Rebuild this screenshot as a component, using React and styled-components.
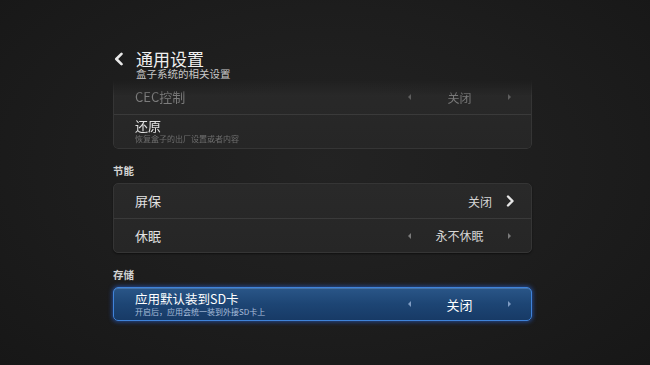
import React from "react";
import styled, { createGlobalStyle } from "styled-components";

const GlobalStyle = createGlobalStyle`
  html, body {
    margin: 0;
    padding: 0;
    background: #1a1a1a;
  }
  * {
    box-sizing: border-box;
  }
`;

const Screen = styled.div`
  width: 650px;
  height: 365px;
  overflow: hidden;
  background: radial-gradient(ellipse at 50% 45%, #232323 0%, #1d1d1d 55%, #171717 100%);
  font-family: "Noto Sans CJK SC", "Noto Sans", "Liberation Sans", sans-serif;
  color: #dcdcdc;
  padding: 50px 118px 0 113px;
`;

const Header = styled.div`
  display: flex;
  align-items: flex-start;
  gap: 11px;
`;

const BackIcon = styled.svg`
  width: 12px;
  height: 14px;
  margin-top: 2px;
  flex: none;
`;

const HeaderText = styled.div`
  display: flex;
  flex-direction: column;
`;

const Title = styled.div`
  font-size: 17px;
  line-height: 17px;
  color: #f0f0f0;
`;

const Subtitle = styled.div`
  font-size: 10.5px;
  line-height: 13px;
  color: #c8c8c8;
`;

const Card = styled.div`
  border-radius: 5px;
  background: linear-gradient(#292929, #262626);
  border: 1px solid #353535;
  box-shadow: 0 1px 2px rgba(0, 0, 0, 0.5);
  ${(p) =>
    p.$faded &&
    `
    border-top: none;
    border-radius: 0 0 5px 5px;
    -webkit-mask-image: linear-gradient(to bottom, rgba(0,0,0,0) 0px, rgba(0,0,0,1) 16px);
    mask-image: linear-gradient(to bottom, rgba(0,0,0,0) 0px, rgba(0,0,0,1) 16px);
  `}
  ${(p) =>
    p.$active &&
    `
    background: linear-gradient(#2a5688, #1d4574 50%, #173a66);
    border: 1px solid #3f83da;
    box-shadow: 0 0 4px 1px rgba(40, 100, 220, 0.6), inset 0 1px 0 rgba(120, 170, 230, 0.35);
  `}
`;

const Row = styled.div`
  height: ${(p) => (p.$h ? p.$h : 34)}px;
  display: flex;
  align-items: center;
  padding-left: 21px;
  padding-right: 20px;
  & + & {
    border-top: 1px solid #3a3a3a;
  }
`;

const Labels = styled.div`
  flex: 1;
  display: flex;
  flex-direction: column;
  justify-content: center;
`;

const RowTitle = styled.div`
  font-size: ${(p) => (p.$active ? 12.5 : 13)}px;
  line-height: 14px;
  color: ${(p) => (p.$dim ? "#7c7c7c" : p.$active ? "#ffffff" : "#e2e2e2")};
`;

const RowHint = styled.div`
  font-size: 8px;
  line-height: 10px;
  margin-top: 1px;
  color: ${(p) => (p.$active ? "#a9bedb" : "#6e6e6e")};
`;

const Picker = styled.div`
  display: flex;
  align-items: center;
  width: 103px;
`;

const Arrow = styled.span`
  width: 0;
  height: 0;
  border-top: 3.5px solid transparent;
  border-bottom: 3.5px solid transparent;
  ${(p) =>
    p.$dir === "left"
      ? `border-right: 3px solid ${p.$color};`
      : `border-left: 3px solid ${p.$color};`}
`;

const Value = styled.div`
  flex: 1;
  text-align: center;
  font-size: ${(p) => (p.$active ? 13 : 12)}px;
  color: ${(p) => (p.$dim ? "#7a7a7a" : p.$active ? "#ffffff" : "#d6d6d6")};
`;

const LinkValue = styled.div`
  display: flex;
  align-items: center;
  gap: 14px;
  font-size: 12px;
  color: #d6d6d6;
  margin-right: -4px;
`;

const Section = styled.div`
  margin-top: ${(p) => p.$top}px;
`;

const SectionLabel = styled.div`
  font-size: 10.5px;
  line-height: 14px;
  font-weight: 700;
  color: #d2d2d2;
  margin-bottom: 5px;
`;

function Chevron({ color = "#e6e6e6" }) {
  return (
    <svg width="9" height="12" viewBox="0 0 9 12">
      <path d="M2 1.5 L6.5 6 L2 10.5" fill="none" stroke={color} strokeWidth="2.4" strokeLinecap="round" strokeLinejoin="round" />
    </svg>
  );
}

function OptionPicker({ value, dim, active }) {
  const color = dim ? "#5e5e5e" : active ? "#7f9cc3" : "#7a7a7a";
  return (
    <Picker>
      <Arrow $dir="left" $color={color} />
      <Value $dim={dim} $active={active}>
        {value}
      </Value>
      <Arrow $dir="right" $color={color} />
    </Picker>
  );
}

export default function App() {
  return (
    <Screen>
      <GlobalStyle />
      <Header>
        <BackIcon viewBox="0 0 12 14">
          <path d="M8.5 1.8 L3.3 7 L8.5 12.2" fill="none" stroke="#e8e8e8" strokeWidth="2.6" strokeLinecap="round" strokeLinejoin="round" />
        </BackIcon>
        <HeaderText>
          <Title>通用设置</Title>
          <Subtitle>盒子系统的相关设置</Subtitle>
        </HeaderText>
      </Header>

      <Card $faded>
        <Row>
          <Labels>
            <RowTitle $dim>CEC控制</RowTitle>
          </Labels>
          <OptionPicker value="关闭" dim />
        </Row>
        <Row>
          <Labels>
            <RowTitle>还原</RowTitle>
            <RowHint>恢复盒子的出厂设置或者内容</RowHint>
          </Labels>
        </Row>
      </Card>

      <Section $top={15}>
        <SectionLabel>节能</SectionLabel>
        <Card>
          <Row>
            <Labels>
              <RowTitle>屏保</RowTitle>
            </Labels>
            <LinkValue>
              关闭
              <Chevron />
            </LinkValue>
          </Row>
          <Row>
            <Labels>
              <RowTitle>休眠</RowTitle>
            </Labels>
            <OptionPicker value="永不休眠" />
          </Row>
        </Card>
      </Section>

      <Section $top={15}>
        <SectionLabel>存储</SectionLabel>
        <Card $active>
          <Row $h={32}>
            <Labels>
              <RowTitle $active>应用默认装到SD卡</RowTitle>
              <RowHint $active>开启后，应用会统一装到外接SD卡上</RowHint>
            </Labels>
            <OptionPicker value="关闭" active />
          </Row>
        </Card>
      </Section>
    </Screen>
  );
}
